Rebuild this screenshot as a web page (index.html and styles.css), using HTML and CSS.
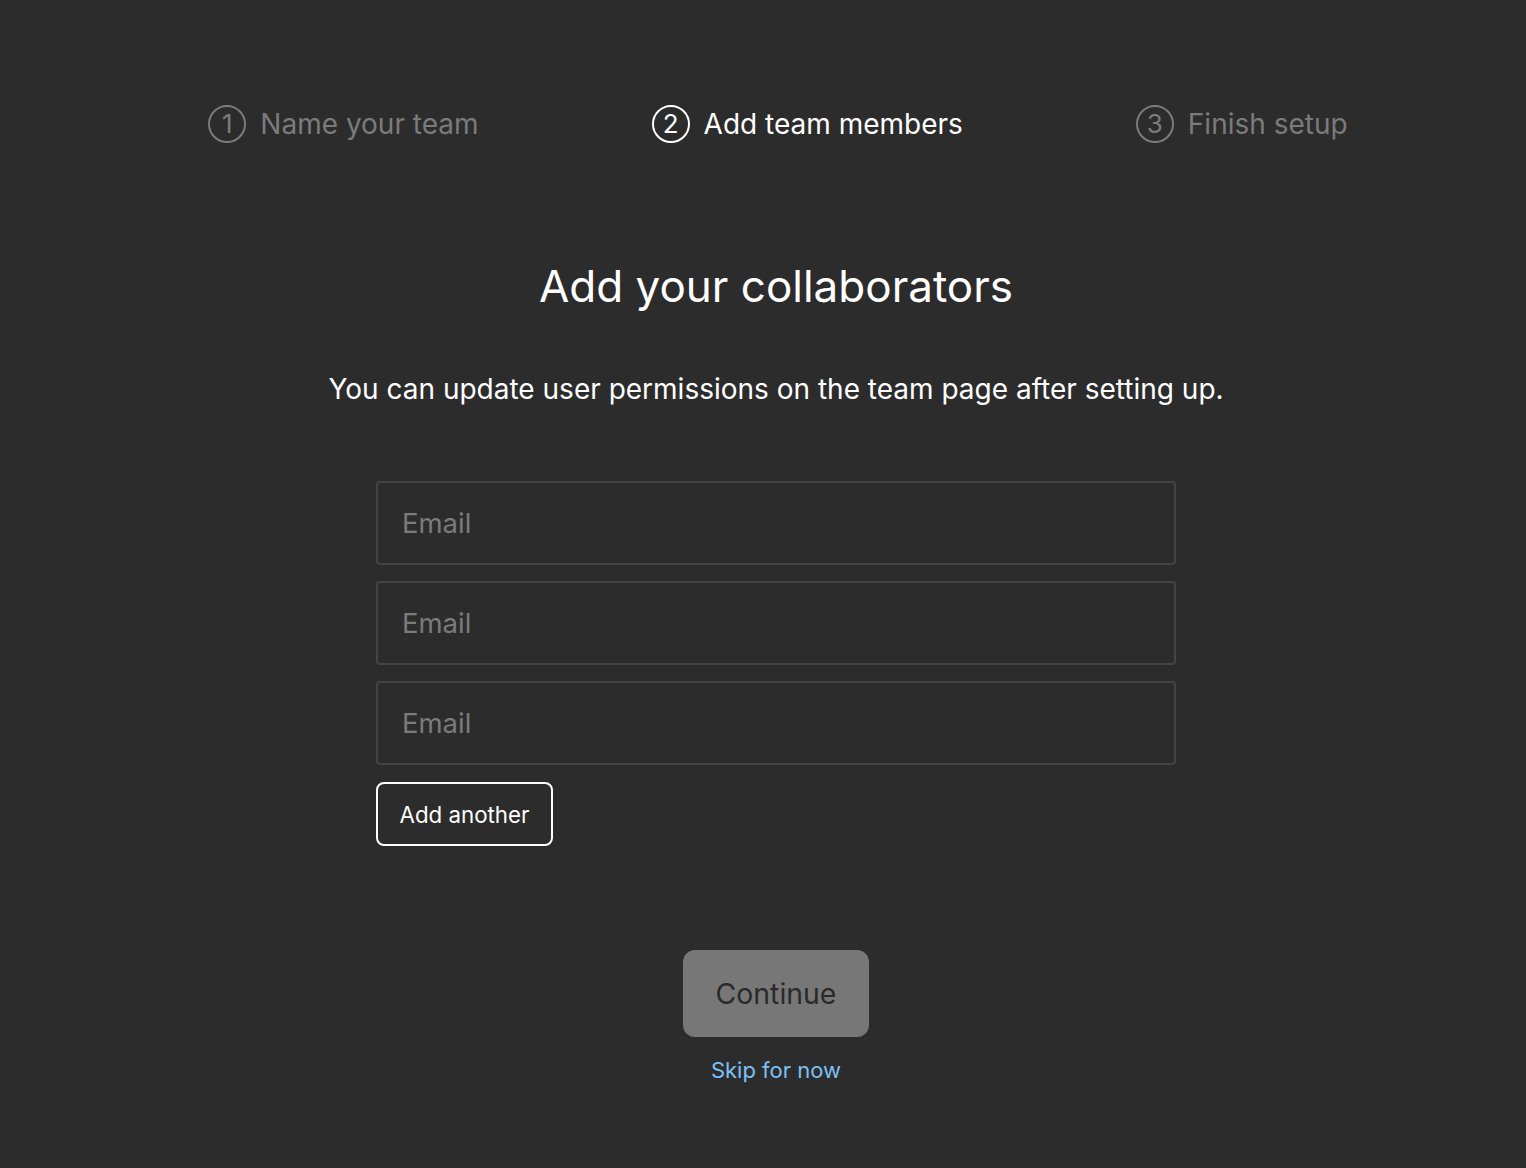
FILE: index.html
```html
<!DOCTYPE html>
<html lang="en">
<head>
<meta charset="utf-8">
<title>Add team members</title>
<link rel="stylesheet" href="styles.css">
</head>
<body>
<div class="page">
  <ol class="steps">
    <li class="step">
      <span class="num">1</span>
      <span class="label">Name your team</span>
    </li>
    <li class="step active">
      <span class="num">2</span>
      <span class="label">Add team members</span>
    </li>
    <li class="step">
      <span class="num">3</span>
      <span class="label">Finish setup</span>
    </li>
  </ol>

  <h1 class="title">Add your collaborators</h1>
  <p class="subtitle">You can update user permissions on the team page after setting up.</p>

  <form class="form">
    <input class="email" type="email" placeholder="Email">
    <input class="email" type="email" placeholder="Email">
    <input class="email" type="email" placeholder="Email">
    <button type="button" class="add">Add another</button>
  </form>

  <div class="actions">
    <button type="button" class="continue" disabled>Continue</button>
    <a class="skip" href="#">Skip for now</a>
  </div>
</div>
</body>
</html>
```

FILE: styles.css
```css
html, body {
  margin: 0;
  padding: 0;
  background: #2c2c2c;
}
body {
  font-family: Inter, "Noto Sans", sans-serif;
  color: #ffffff;
  min-height: 1168px;
}
.page {
  padding-left: 26px;
  display: flex;
  flex-direction: column;
  align-items: center;
}
.steps {
  list-style: none;
  margin: 0;
  padding: 0;
  margin-top: 104px;
  margin-left: 4px;
  display: flex;
  gap: 173px;
}
.step {
  display: flex;
  align-items: center;
  gap: 14px;
  color: #7b7b7b;
  font-size: 28px;
  line-height: 40px;
}
.step.active {
  color: #ffffff;
}
.num {
  box-sizing: border-box;
  width: 38px;
  height: 38px;
  border: 2px solid currentColor;
  border-radius: 50%;
  display: flex;
  align-items: center;
  justify-content: center;
  font-size: 26px;
  line-height: 1;
}
.title {
  margin: 0;
  margin-top: 115px;
  font-size: 44px;
  font-weight: 400;
  line-height: 54px;
}
.subtitle {
  margin: 0;
  margin-top: 58px;
  font-size: 28px;
  line-height: 36px;
}
.form {
  margin-top: 74px;
  width: 800px;
  display: flex;
  flex-direction: column;
  align-items: flex-start;
  gap: 16px;
}
.email {
  box-sizing: border-box;
  width: 800px;
  height: 84px;
  background: #2c2c2c;
  border: 2px solid #444444;
  border-radius: 4px;
  padding: 0 24px;
  font-family: Inter, "Noto Sans", sans-serif;
  font-size: 27.5px;
  color: #ffffff;
  outline: none;
}
.email::placeholder {
  color: #7b7b7b;
}
.add {
  box-sizing: border-box;
  margin-top: 1px;
  width: 177px;
  height: 64px;
  background: transparent;
  border: 2px solid #ffffff;
  border-radius: 8px;
  color: #ffffff;
  font-family: Inter, "Noto Sans", sans-serif;
  font-size: 22.3px;
  padding: 0;
}
.actions {
  margin-top: 104px;
  display: flex;
  flex-direction: column;
  align-items: center;
}
.continue {
  box-sizing: border-box;
  width: 186px;
  height: 87px;
  background: #777777;
  border: none;
  border-radius: 12px;
  color: #2a2a2a;
  font-family: Inter, "Noto Sans", sans-serif;
  font-size: 28.4px;
  padding: 0;
}
.skip {
  margin-top: 18px;
  color: #7cc1f5;
  font-size: 22px;
  line-height: 30px;
  text-decoration: none;
}
```
